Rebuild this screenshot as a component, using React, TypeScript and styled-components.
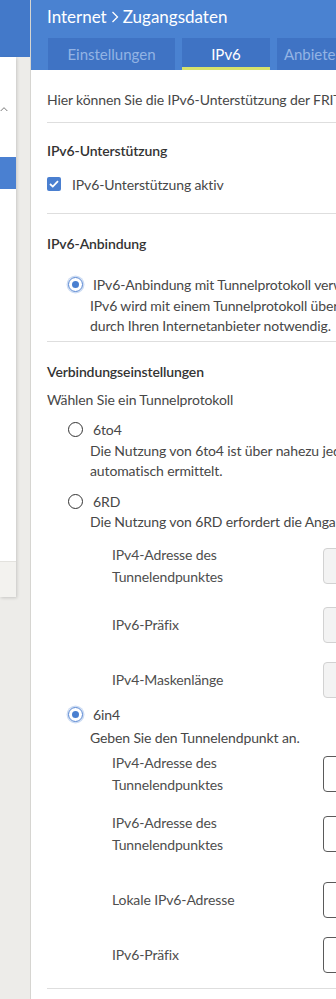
import React from "react";
import styled, { createGlobalStyle } from "styled-components";

const Global = createGlobalStyle`
  html, body { margin: 0; padding: 0; }
  body {
    font-family: Lato, "Noto Sans", sans-serif;
    background: #edece9;
    -webkit-font-smoothing: antialiased;
  }
`;

const Page = styled.div`
  display: flex;
  width: 336px;
  height: 999px;
  overflow: hidden;
  background: #edece9;
`;

const LeftCol = styled.div`
  flex: 0 0 30px;
  display: flex;
  flex-direction: column;
`;

const TopBand = styled.div`
  height: 57px;
  flex-shrink: 0;
  background: #4379c9;
`;

const SideNav = styled.nav`
  width: 16px;
  height: 540px;
  background: #fff;
  box-shadow: 1px 1px 3px rgba(0, 0, 0, 0.16);
  display: flex;
  flex-direction: column;
`;

const NavGroup = styled.div`
  height: 16px;
  margin-top: 44px;
  display: flex;
  align-items: center;
  justify-content: flex-end;
  padding-right: 8px;
`;

const NavItem = styled.div<{ $active?: boolean }>`
  height: 32px;
  margin-top: 40px;
  background: ${(p) => (p.$active ? "#4a80d1" : "transparent")};
`;

const NavSpacer = styled.div`
  flex: 1;
`;

const NavFooter = styled.div`
  height: 35px;
  background: #f3f2ef;
  border-top: 1px solid #e3e2de;
`;

const Main = styled.main`
  flex: 0 0 660px;
  background: #fff;
  border-left: 1px solid #d6d5d1;
  display: flex;
  flex-direction: column;
`;

const Header = styled.header`
  height: 70px;
  box-sizing: border-box;
  background: #4a82d1;
  padding: 5px 0 0 16px;
`;

const Title = styled.h1`
  margin: 0;
  font-size: 17px;
  font-weight: 400;
  line-height: 24px;
  color: #fff;
  display: flex;
  align-items: center;
  gap: 4px;
`;

const Tabs = styled.div`
  display: flex;
  gap: 7px;
  margin-top: 9px;
  padding-left: 1px;
`;

const Tab = styled.div<{ $w: number; $active?: boolean }>`
  width: ${(p) => p.$w}px;
  height: 32px;
  box-sizing: border-box;
  flex-shrink: 0;
  background: #3f73c4;
  color: ${(p) => (p.$active ? "#ffffff" : "#93b3e4")};
  font-size: 15px;
  display: flex;
  align-items: center;
  justify-content: center;
  padding-top: 2px;
  border-bottom: 3px solid ${(p) => (p.$active ? "#d7e26b" : "transparent")};
`;

const Content = styled.div`
  padding: 20px 0 0 16px;
  color: #474747;
  font-size: 14px;
  letter-spacing: -0.12px;
`;

const Line = styled.div<{ $mt?: number }>`
  line-height: 20px;
  white-space: nowrap;
  margin-top: ${(p) => p.$mt ?? 0}px;
`;

const Divider = styled.hr<{ $mt: number }>`
  margin: ${(p) => p.$mt}px 0 0 0;
  border: 0;
  height: 1px;
  background: #dedede;
`;

const Heading = styled.h2<{ $mt: number }>`
  margin: ${(p) => p.$mt}px 0 0 0;
  font-size: 14px;
  font-weight: 600;
  line-height: 20px;
  color: #333;
  white-space: nowrap;
`;

const CheckRow = styled.label<{ $mt: number }>`
  display: flex;
  align-items: center;
  gap: 11px;
  height: 20px;
  margin-top: ${(p) => p.$mt}px;
  white-space: nowrap;
`;

const CheckBox = styled.span`
  width: 14px;
  height: 14px;
  border-radius: 2px;
  background: #4a7fd0;
  display: flex;
  align-items: center;
  justify-content: center;
  flex-shrink: 0;
`;

const RadioRow = styled.label<{ $mt: number }>`
  display: flex;
  align-items: center;
  gap: 10px;
  height: 22px;
  padding-left: 21px;
  margin-top: ${(p) => p.$mt}px;
  white-space: nowrap;
`;

const RadioCircle = styled.span<{ $on?: boolean }>`
  width: 15px;
  height: 15px;
  box-sizing: border-box;
  border-radius: 50%;
  flex-shrink: 0;
  border: ${(p) => (p.$on ? "1.5px solid #5786d2" : "1.8px solid #333")};
  box-shadow: ${(p) => (p.$on ? "0 0 0 1.5px #cddcf3" : "none")};
  display: flex;
  align-items: center;
  justify-content: center;
  &::after {
    content: "";
    width: 7px;
    height: 7px;
    border-radius: 50%;
    background: #4a7fd0;
    display: ${(p) => (p.$on ? "block" : "none")};
  }
`;

const Desc = styled.div<{ $mt: number }>`
  padding-left: 43px;
  margin-top: ${(p) => p.$mt}px;
  line-height: 20px;
  white-space: nowrap;
`;

const Fields = styled.div<{ $mt: number }>`
  display: flex;
  flex-direction: column;
  margin-top: ${(p) => p.$mt}px;
`;

const FieldRow = styled.div<{ $mt: number }>`
  display: flex;
  align-items: center;
  padding-left: 65px;
  min-height: 40px;
  margin-top: ${(p) => p.$mt}px;
`;

const FieldLabel = styled.div`
  width: 211px;
  flex-shrink: 0;
  line-height: 22px;
  color: #4e4e4e;
`;

const Input = styled.input<{ $disabled?: boolean }>`
  width: 180px;
  height: 36px;
  box-sizing: border-box;
  border-radius: 4px;
  border: 1px solid ${(p) => (p.$disabled ? "#d2d2d2" : "#5a5a5a")};
  background: ${(p) => (p.$disabled ? "#f3f3f3" : "#fff")};
  flex-shrink: 0;
  font: inherit;
`;

type Field = { label: string[]; mt: number };

const rdFields: Field[] = [
  { label: ["IPv4-Adresse des", "Tunnelendpunktes"], mt: 0 },
  { label: ["IPv6-Präfix"], mt: 17 },
  { label: ["IPv4-Maskenlänge"], mt: 15 },
];

const in4Fields: Field[] = [
  { label: ["IPv4-Adresse des", "Tunnelendpunktes"], mt: 0 },
  { label: ["IPv6-Adresse des", "Tunnelendpunktes"], mt: 16 },
  { label: ["Lokale IPv6-Adresse"], mt: 24 },
  { label: ["IPv6-Präfix"], mt: 15 },
];

const Chevron = () => (
  <svg width="8" height="12" viewBox="0 0 8 12" aria-hidden>
    <polyline points="1.5,1 6.5,6 1.5,11" fill="none" stroke="#fff" strokeWidth="1.3" />
  </svg>
);

const UpChevron = () => (
  <svg width="12" height="8" viewBox="0 0 12 8" aria-hidden>
    <polyline points="1,7 6,2 11,7" fill="none" stroke="#555" strokeWidth="1.2" />
  </svg>
);

const Check = () => (
  <svg width="10" height="8" viewBox="0 0 10 8" aria-hidden>
    <polyline points="1,4 3.8,6.6 9,1.2" fill="none" stroke="#fff" strokeWidth="1.8" />
  </svg>
);

const FieldList = ({ fields, mt, disabled }: { fields: Field[]; mt: number; disabled?: boolean }) => (
  <Fields $mt={mt}>
    {fields.map((f, i) => (
      <FieldRow key={i} $mt={f.mt}>
        <FieldLabel>
          {f.label.map((l) => (
            <div key={l}>{l}</div>
          ))}
        </FieldLabel>
        <Input $disabled={disabled} disabled={disabled} readOnly />
      </FieldRow>
    ))}
  </Fields>
);

export default function App() {
  return (
    <>
      <Global />
      <Page>
        <LeftCol>
          <TopBand />
          <SideNav>
            <NavGroup>
              <UpChevron />
            </NavGroup>
            <NavItem $active />
            <NavSpacer />
            <NavFooter />
          </SideNav>
        </LeftCol>
        <Main>
          <Header>
            <Title>
              Internet <Chevron /> Zugangsdaten
            </Title>
            <Tabs>
              <Tab $w={127}>Einstellungen</Tab>
              <Tab $w={88} $active>
                IPv6
              </Tab>
              <Tab $w={127}>Anbieter-Dienste</Tab>
            </Tabs>
          </Header>
          <Content>
            <Line>Hier können Sie die IPv6-Unterstützung der FRITZ!Box einrichten.</Line>
            <Divider $mt={12} />

            <Heading $mt={18}>IPv6-Unterstützung</Heading>
            <CheckRow $mt={13}>
              <CheckBox>
                <Check />
              </CheckBox>
              IPv6-Unterstützung aktiv
            </CheckRow>
            <Divider $mt={19} />

            <Heading $mt={20}>IPv6-Anbindung</Heading>
            <RadioRow $mt={19}>
              <RadioCircle $on />
              IPv6-Anbindung mit Tunnelprotokoll verwenden
            </RadioRow>
            <Desc $mt={1}>
              <Line>IPv6 wird mit einem Tunnelprotokoll über IPv4 genutzt. Dies ist nur bei</Line>
              <Line>durch Ihren Internetanbieter notwendig.</Line>
            </Desc>
            <Divider $mt={5} />

            <Heading $mt={20}>Verbindungseinstellungen</Heading>
            <Line $mt={8}>Wählen Sie ein Tunnelprotokoll</Line>

            <RadioRow $mt={8}>
              <RadioCircle />
              6to4
            </RadioRow>
            <Desc $mt={1}>
              <Line>Die Nutzung von 6to4 ist über nahezu jeden Internetzugang möglich. Die</Line>
              <Line>automatisch ermittelt.</Line>
            </Desc>

            <RadioRow $mt={9}>
              <RadioCircle />
              6RD
            </RadioRow>
            <Desc $mt={0}>
              <Line>Die Nutzung von 6RD erfordert die Angabe der folgenden Daten.</Line>
            </Desc>
            <FieldList fields={rdFields} mt={12} disabled />

            <RadioRow $mt={3}>
              <RadioCircle $on />
              6in4
            </RadioRow>
            <Desc $mt={3}>
              <Line>Geben Sie den Tunnelendpunkt an.</Line>
            </Desc>
            <FieldList fields={in4Fields} mt={4} />
            <Divider $mt={13} />
          </Content>
        </Main>
      </Page>
    </>
  );
}
